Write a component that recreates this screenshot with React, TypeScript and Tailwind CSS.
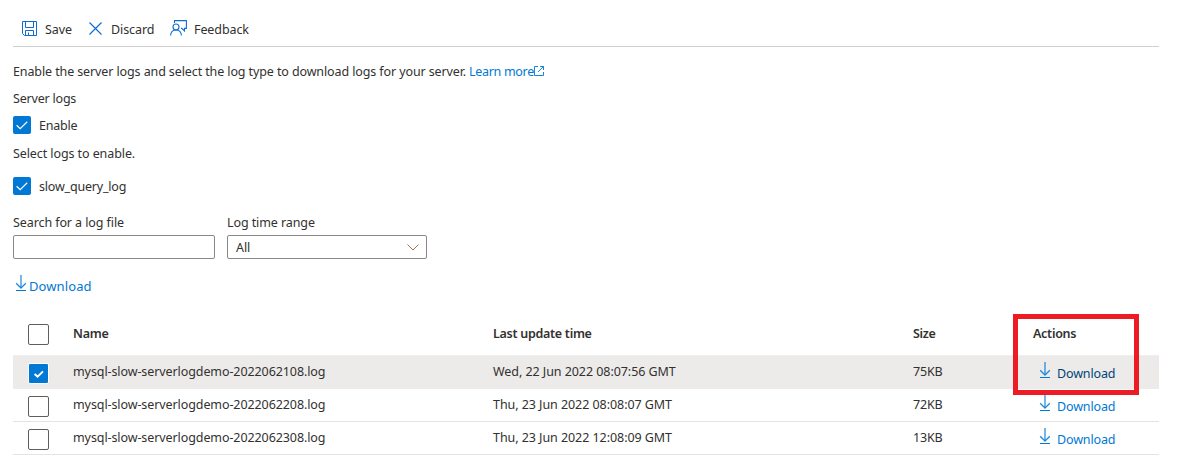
import React from "react";

function Check({ className }: { className: string }) {
  return (
    <span className={`${className} flex h-[18px] w-[18px] shrink-0 items-center justify-center rounded-[2px] bg-[#0078d4]`}>
      <svg width="18" height="18" viewBox="0 0 18 18" fill="none" stroke="#fff" strokeWidth="1.2">
        <path d="M3.6 9.2 7.2 12.6 14.2 5.7" />
      </svg>
    </span>
  );
}

function RowCheck({ checked }: { checked?: boolean }) {
  if (checked) {
    return (
      <span className="flex h-[21px] w-[21px] items-center justify-center rounded-[2px] border border-white bg-[#0078d4]">
        <svg width="19" height="19" viewBox="0 0 19 19" fill="none" stroke="#fff" strokeWidth="2">
          <path d="M5.6 10 8.6 12.6 14 7.4" />
        </svg>
      </span>
    );
  }
  return <span className="block h-[21px] w-[21px] rounded-[2px] border border-[#605e5c] bg-white" />;
}

function DownIcon() {
  return (
    <svg className="shrink-0" width="12" height="17" viewBox="0 0 12 17" fill="none" stroke="#0078d4">
      <path d="M6 0V12.5" strokeWidth="1.8" opacity=".6" />
      <path d="M1.2 8.2 6 13 10.8 8.2" strokeWidth="1.3" opacity=".85" />
      <path d="M1 15.5H11" />
    </svg>
  );
}

const cols = "grid grid-cols-[60px_420px_420px_120px_126px]";

const rows = [
  { name: "mysql-slow-serverlogdemo-2022062108.log", time: "Wed, 22 Jun 2022 08:07:56 GMT", size: "75KB", checked: true },
  { name: "mysql-slow-serverlogdemo-2022062208.log", time: "Thu, 23 Jun 2022 08:08:07 GMT", size: "72KB", checked: false },
  { name: "mysql-slow-serverlogdemo-2022062308.log", time: "Thu, 23 Jun 2022 12:08:09 GMT", size: "13KB", checked: false },
];

export default function App() {
  return (
    <div className="relative h-[474px] w-[1196px] overflow-hidden whitespace-nowrap bg-white pl-[13px] font-['Noto_Sans','Open_Sans',sans-serif] text-[12.5px] leading-[20px] tracking-[-0.09px] text-[#323130]">
      <div className="flex h-[47px] w-[1146px] border-b border-[#d2d0ce] pt-[20px]">
        <svg className="ml-[9px] mt-px" width="15" height="15" viewBox="0 0 15 15" fill="none" stroke="#0f6cd0">
          <path d="M.5 .5H14.5V14.5H2.5L.5 12.5ZM3.5 .5V6.5H11.5V.5M3.5 14V9.5H11.5V14M6.5 14V11.5" />
        </svg>
        <span className="ml-2 w-[44px]">Save</span>
        <svg className="mt-[2px]" width="13" height="13" viewBox="0 0 13 13" fill="none" stroke="#0f6cd0" strokeWidth="1.15">
          <path d="M.5 .5 12.5 12.5M12.5 .5 .5 12.5" />
        </svg>
        <span className="ml-[9px] w-[59px]">Discard</span>
        <svg width="17" height="16" viewBox="0 0 17 16" fill="none" stroke="#0f6cd0" strokeWidth="1.1">
          <path d="M4.5 3V.6H16.4V8.4H14.5V11L11.8 8.4H11" />
          <circle cx="6" cy="7" r="3" />
          <path d="M.6 15.5C.8 12 3 10 6 10S11.2 12 11.4 15.5" />
        </svg>
        <span className="ml-[7px]">Feedback</span>
      </div>

      <div className="mt-[15px] flex h-[18px]">
        <span className="w-[456px] tracking-[-0.11px]">Enable the server logs and select the log type to download logs for your server.</span>
        <a className="w-[65px] tracking-[-0.3px] text-[#0078d4]">Learn more</a>
        <svg className="mt-[4px]" width="10" height="10" viewBox="0 0 10 10" fill="none" stroke="#0078d4" strokeWidth=".9">
          <path d="M4 .5H.5V9.5H9.5V6M6 .5H9.5V4M9.5 .5 4 6" />
        </svg>
      </div>

      <div className="mt-[9px] h-[18px] tracking-[-0.2px]">Server logs</div>
      <div className="mt-[9px] flex h-[18px]">
        <Check className="mr-2" />
        <span className="tracking-[-0.2px]">Enable</span>
      </div>
      <div className="mt-[10px] h-[18px]">Select logs to enable.</div>
      <div className="mt-[15px] flex h-[18px]">
        <Check className="mr-2" />
        <span className="tracking-[-0.2px]">slow_query_log</span>
      </div>

      <div className="mt-[18px] flex">
        <label className="w-[214px]">
          <span className="block h-[22px]">Search for a log file</span>
          <input className="block h-6 w-[202px] rounded-[2px] border border-[#8a8886] bg-white px-2 outline-none" />
        </label>
        <div>
          <span className="block h-[22px]">Log time range</span>
          <div className="flex h-6 w-[200px] items-center justify-between rounded-[2px] border border-[#8a8886] pl-2 pr-[7px]">
            <span className="pt-[2px]">All</span>
            <svg width="12" height="7" viewBox="0 0 12 7" fill="none" stroke="#a8703f">
              <path d="M.5 .5 6 6 11.5 .5" />
            </svg>
          </div>
        </div>
      </div>

      <div className="mt-4 flex h-[20px] pl-[2px] text-[#0078d4]">
        <DownIcon />
        <span className="ml-[2px] mt-[1px] text-[13px] tracking-[0.1px]">Download</span>
      </div>

      <div className="mt-[20px] w-[1146px]">
        <div className={`${cols} h-[41px] border-b border-[#f0efee] font-semibold tracking-[-0.28px]`}>
          <div className="pl-[15px] pt-[9px]"><RowCheck /></div>
          <div className="pt-[9px]">Name</div>
          <div className="pt-[9px]">Last update time</div>
          <div className="pt-[9px]">Size</div>
          <div className="pt-[9px]">Actions</div>
        </div>
        {rows.map((r) => (
          <div key={r.name} className={`${cols} h-[33px] border-b ${r.checked ? "border-[#edebe9] bg-[#edebe9]" : "border-[#e5e4e3]"}`}>
            <div className="pl-[15px] pt-[7px]"><RowCheck checked={r.checked} /></div>
            <div className="pt-[6px]">{r.name}</div>
            <div className="pt-[6px] tracking-[-0.06px]">{r.time}</div>
            <div className="pt-[6px] tracking-[-0.2px]">{r.size}</div>
            <div className={`flex pl-[6px] pt-[6px] ${r.checked ? "text-[#004578]" : "text-[#0078d4]"}`}>
              <DownIcon />
              <span className="ml-[6px] mt-[2px] tracking-[-0.15px]">Download</span>
            </div>
          </div>
        ))}
      </div>
      <div className="absolute left-[1013px] top-[314px] h-[81px] w-[126px] border-[5px] border-[#ed1c24]" />
    </div>
  );
}
